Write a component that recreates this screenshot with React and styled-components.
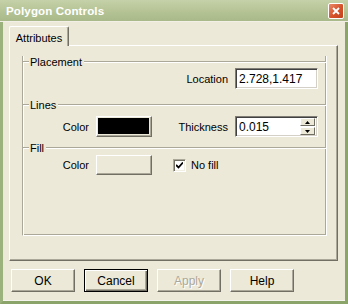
import React from "react";
import styled, { createGlobalStyle } from "styled-components";

const GlobalStyle = createGlobalStyle`
  html, body {
    margin: 0;
    padding: 0;
    background: #ece9d8;
  }
  body {
    font-family: "Liberation Sans", Arial, sans-serif;
    font-size: 11px;
    color: #000;
  }
`;

const Window = styled.div`
  width: 348px;
  height: 304px;
  box-sizing: border-box;
  display: flex;
  flex-direction: column;
  background: #ece9d8;
  border-left: 3px solid #9cb27c;
  border-right: 3px solid #8ba46a;
  border-bottom: 3px solid #8ba46a;
  box-shadow: inset 0 -1px 0 #f4f3ec;
`;

const TitleBar = styled.div`
  height: 21px;
  flex: none;
  display: flex;
  align-items: center;
  justify-content: space-between;
  margin: 0 -3px;
  padding: 0 3px 0 3px;
  background: linear-gradient(#c5d1a8, #b3c293 60%, #a9b98a);
  border-bottom: 1px solid #f2f0e6;
`;

const Title = styled.span`
  color: #fff;
  font-weight: bold;
  font-size: 11.6px;
  letter-spacing: 0.1px;
  padding-left: 3px;
`;

const CloseButton = styled.div`
  width: 14px;
  height: 14px;
  margin-right: 1px;
  border: 1px solid #fff;
  border-radius: 2px;
  background: linear-gradient(135deg, #e98a6a, #d5512a 55%, #c2421c);
  display: flex;
  align-items: center;
  justify-content: center;
`;

const Body = styled.div`
  flex: 1;
  display: flex;
  flex-direction: column;
  padding: 4px 7px 0 6px;
`;

const TabStrip = styled.div`
  display: flex;
  height: 20px;
  position: relative;
  z-index: 1;
`;

const Tab = styled.div`
  width: 60px;
  box-sizing: border-box;
  height: 20px;
  padding-top: 5px;
  text-align: center;
  background: #ece9d8;
  border-left: 1px solid #fff;
  border-top: 1px solid #fff;
  border-right: 1px solid #716f64;
  box-shadow: inset -1px 0 0 #aca899;
  border-radius: 2px 2px 0 0;
`;

const Panel = styled.div`
  height: 216px;
  box-sizing: border-box;
  margin-top: -1px;
  border-left: 1px solid #fff;
  border-top: 1px solid #fff;
  border-right: 1px solid #716f64;
  border-bottom: 1px solid #716f64;
  box-shadow: inset -1px -1px 0 #aca899;
  padding: 10px 10px 0 12px;
`;

const Group = styled.div`
  height: 179px;
  border-left: 1px solid #aca899;
  border-right: 1px solid #fff;
  border-bottom: 1px solid #fff;
  box-shadow: inset 1px 0 0 #fff, inset -1px -1px 0 #aca899;
  display: flex;
  flex-direction: column;
`;

const Legend = styled.div`
  display: flex;
  align-items: center;
  height: 12px;
  margin-top: ${(p) => p.$top || 0}px;
`;

const Rule = styled.div`
  height: 1px;
  border-bottom: 1px solid #fff;
  background: #aca899;
  width: ${(p) => (p.$w ? `${p.$w}px` : "auto")};
  flex: ${(p) => (p.$w ? "none" : 1)};
`;

const LegendText = styled.span`
  padding: 0 2px 0 1px;
  line-height: 12px;
`;

const Row = styled.div`
  display: grid;
  grid-template-columns: 66px 56px 69px 83px;
  column-gap: 7px;
  align-items: center;
  margin-top: ${(p) => p.$top || 0}px;
`;

const Label = styled.span`
  justify-self: end;
  grid-column: ${(p) => p.$col};
`;

const TextInput = styled.div`
  grid-column: 4;
  height: 21px;
  box-sizing: border-box;
  background: #fff;
  border-top: 1px solid #7f7d76;
  border-left: 1px solid #7f7d76;
  border-right: 1px solid #fff;
  border-bottom: 1px solid #fff;
  box-shadow: inset 1px 1px 0 #404040, inset -1px -1px 0 #d4d0c8;
  padding: 3px 0 0 3px;
  display: flex;
  font-size: 12px;
`;

const InputText = styled.span`
  flex: 1;
`;

const Spin = styled.div`
  display: flex;
  flex-direction: column;
  gap: 1px;
  margin: -2px 2px 0 0;
`;

const SpinButton = styled.div`
  width: 15px;
  height: 8px;
  box-sizing: border-box;
  background: #ece9d8;
  border-top: 1px solid #fff;
  border-left: 1px solid #fff;
  border-right: 1px solid #716f64;
  border-bottom: 1px solid #716f64;
  display: flex;
  align-items: center;
  justify-content: center;
`;

const ColorButton = styled.div`
  grid-column: 2;
  height: ${(p) => p.$h}px;
  box-sizing: border-box;
  border-top: 1px solid #fff;
  border-left: 1px solid #fff;
  border-right: 1px solid #716f64;
  border-bottom: 1px solid #716f64;
  box-shadow: inset -1px -1px 0 #aca899;
  padding: 1px 2px 2px 1px;
  display: flex;
`;

const Swatch = styled.div`
  flex: 1;
  background: ${(p) => p.$color};
`;

const CheckRow = styled.label`
  grid-column: 3 / 5;
  display: flex;
  align-items: center;
  gap: 5px;
  padding-left: 14px;
`;

const CheckBox = styled.div`
  width: 13px;
  height: 13px;
  box-sizing: border-box;
  background: #fff;
  border-top: 1px solid #aca899;
  border-left: 1px solid #aca899;
  border-right: 1px solid #fff;
  border-bottom: 1px solid #fff;
  box-shadow: inset 1px 1px 0 #716f64, inset -1px -1px 0 #f1efe2;
  display: flex;
  align-items: center;
  justify-content: center;
`;

const ButtonBar = styled.div`
  display: flex;
  gap: 9px;
  padding: 8px 0 0 2px;
`;

const Button = styled.div`
  width: 64px;
  height: 23px;
  box-sizing: border-box;
  display: flex;
  align-items: center;
  justify-content: center;
  background: #ece9d8;
  border-top: 1px solid ${(p) => (p.$default ? "#000" : "#fff")};
  border-left: 1px solid ${(p) => (p.$default ? "#000" : "#fff")};
  border-right: 1px solid ${(p) => (p.$default ? "#000" : "#716f64")};
  border-bottom: 1px solid ${(p) => (p.$default ? "#000" : "#716f64")};
  box-shadow: ${(p) =>
    p.$default
      ? "inset 1px 1px 0 #fff, inset -1px -1px 0 #716f64, inset -2px -2px 0 #aca899"
      : "inset -1px -1px 0 #aca899"};
  color: ${(p) => (p.$disabled ? "#aca899" : "#000")};
  text-shadow: ${(p) => (p.$disabled ? "1px 1px 0 #fff" : "none")};
  font-size: 12px;
`;

const Triangle = ({ up }) => (
  <svg width="5" height="3" viewBox="0 0 5 3">
    <path d={up ? "M2.5 0 L5 3 L0 3 Z" : "M0 0 L5 0 L2.5 3 Z"} fill="#000" />
  </svg>
);

export default function App() {
  return (
    <>
      <GlobalStyle />
      <Window>
        <TitleBar>
          <Title>Polygon Controls</Title>
          <CloseButton>
            <svg width="8" height="8" viewBox="0 0 8 8">
              <path d="M1 1 L7 7 M7 1 L1 7" stroke="#fff" strokeWidth="1.8" />
            </svg>
          </CloseButton>
        </TitleBar>
        <Body>
          <TabStrip>
            <Tab>Attributes</Tab>
          </TabStrip>
          <Panel>
            <Group>
              <Legend>
                <Rule $w={6} />
                <LegendText>Placement</LegendText>
                <Rule />
              </Legend>
              <Row>
                <Label $col={3}>Location</Label>
                <TextInput>
                  <InputText>2.728,1.417</InputText>
                </TextInput>
              </Row>
              <Legend $top={10}>
                <Rule $w={6} />
                <LegendText>Lines</LegendText>
                <Rule />
              </Legend>
              <Row $top={5}>
                <Label $col={1}>Color</Label>
                <ColorButton $h={21}>
                  <Swatch $color="#000" />
                </ColorButton>
                <Label $col={3}>Thickness</Label>
                <TextInput>
                  <InputText>0.015</InputText>
                  <Spin>
                    <SpinButton>
                      <Triangle up />
                    </SpinButton>
                    <SpinButton>
                      <Triangle />
                    </SpinButton>
                  </Spin>
                </TextInput>
              </Row>
              <Legend $top={5}>
                <Rule $w={6} />
                <LegendText>Fill</LegendText>
                <Rule />
              </Legend>
              <Row $top={1}>
                <Label $col={1}>Color</Label>
                <ColorButton $h={20}>
                  <Swatch $color="#ece9d8" />
                </ColorButton>
                <CheckRow>
                  <CheckBox>
                    <svg width="7" height="7" viewBox="0 0 7 7">
                      <path d="M0 3 L2.5 5.5 L7 0.5" stroke="#000" strokeWidth="1.8" fill="none" />
                    </svg>
                  </CheckBox>
                  No fill
                </CheckRow>
              </Row>
            </Group>
          </Panel>
          <ButtonBar>
            <Button>OK</Button>
            <Button $default>Cancel</Button>
            <Button $disabled>Apply</Button>
            <Button>Help</Button>
          </ButtonBar>
        </Body>
      </Window>
    </>
  );
}
